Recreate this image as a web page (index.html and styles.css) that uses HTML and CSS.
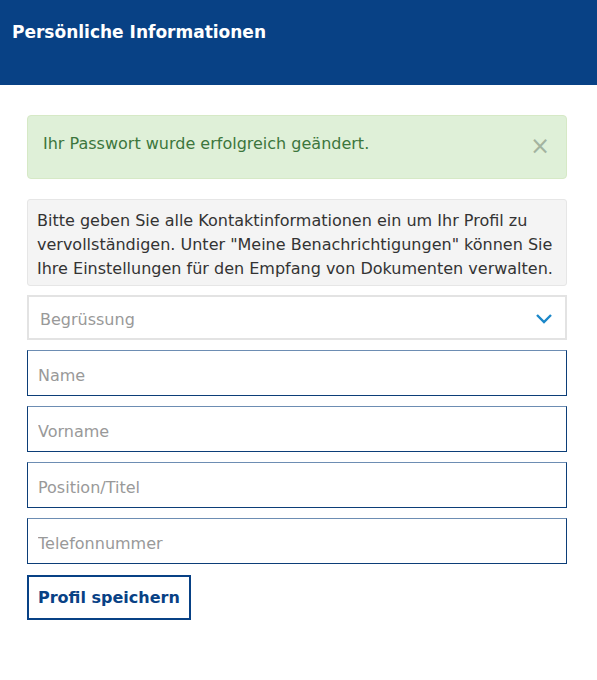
FILE: index.html
```html
<!DOCTYPE html>
<html lang="de">
<head>
    <meta charset="UTF-8">
    <title>Persönliche Informationen</title>
    <link rel="stylesheet" href="styles.css">
</head>
<body>
<div class="header">
    <h1>Persönliche Informationen</h1>
</div>
<div class="content">
    <div class="alert">
        <span>Ihr Passwort wurde erfolgreich geändert.</span>
        <button class="close" type="button">&times;</button>
    </div>
    <div class="info">
        Bitte geben Sie alle Kontaktinformationen ein um Ihr Profil zu vervollständigen. Unter "Meine Benachrichtigungen" können Sie Ihre Einstellungen für den Empfang von Dokumenten verwalten.
    </div>
    <form class="form">
        <div class="select">
            <span>Begrüssung</span>
            <svg width="18" height="12" viewBox="0 0 18 12"><path d="M2 3 L9 10 L16 3" fill="none" stroke="#1b87c9" stroke-width="2.4"/></svg>
        </div>
        <input class="field" type="text" placeholder="Name">
        <input class="field" type="text" placeholder="Vorname">
        <input class="field" type="text" placeholder="Position/Titel">
        <input class="field" type="text" placeholder="Telefonnummer">
        <div><button class="save" type="button">Profil speichern</button></div>
    </form>
</div>
</body>
</html>
```
FILE: styles.css
```css
body {
    margin: 0;
    font-family: Tahoma, "DejaVu Sans", sans-serif;
    color: #333;
}

.header {
    background: #084185;
    height: 85px;
    padding: 22px 12px 0;
    box-sizing: border-box;
}

.header h1 {
    margin: 0;
    color: #fff;
    font-size: 17px;
    font-weight: bold;
}

.content {
    padding: 30px 30px 0 27px;
}

.alert {
    display: flex;
    justify-content: space-between;
    align-items: center;
    height: 64px;
    box-sizing: border-box;
    padding: 0 16px 7px 15px;
    background: #dff0d8;
    border: 1px solid #d6e9c6;
    border-radius: 4px;
    color: #3c763d;
    font-size: 16px;
}

.close {
    border: 0;
    background: none;
    padding: 0;
    margin-top: 5px;
    color: #a3b3a0;
    font-size: 24px;
    line-height: 1;
    font-family: "DejaVu Sans", sans-serif;
}

.info {
    margin-top: 20px;
    padding: 9px 9px 4px 9px;
    background: #f4f4f4;
    border: 1px solid #e6e6e6;
    border-radius: 3px;
    font-size: 16px;
    line-height: 24px;
}

.form {
    display: flex;
    flex-direction: column;
    gap: 10px;
    margin-top: 9px;
}

.select {
    display: flex;
    justify-content: space-between;
    align-items: center;
    height: 45px;
    box-sizing: border-box;
    padding: 3px 12px 0 11px;
    border: 2px solid #e3e3e3;
    color: #999;
    font-size: 16px;
}

.select svg {
    margin-top: -3px;
}

.field {
    height: 46px;
    box-sizing: border-box;
    margin: 0;
    padding: 4px 10px 0;
    border: 1px solid #0c3e78;
    border-top-color: #6d8db3;
    font-family: Tahoma, "DejaVu Sans", sans-serif;
    font-size: 16px;
    color: #333;
}

.field::placeholder {
    color: #999;
}

.save {
    height: 45px;
    padding: 0 9px;
    margin-top: 1px;
    background: #fff;
    border: 2px solid #084185;
    color: #084185;
    font-family: Tahoma, "DejaVu Sans", sans-serif;
    font-size: 16px;
    font-weight: bold;
}
```
